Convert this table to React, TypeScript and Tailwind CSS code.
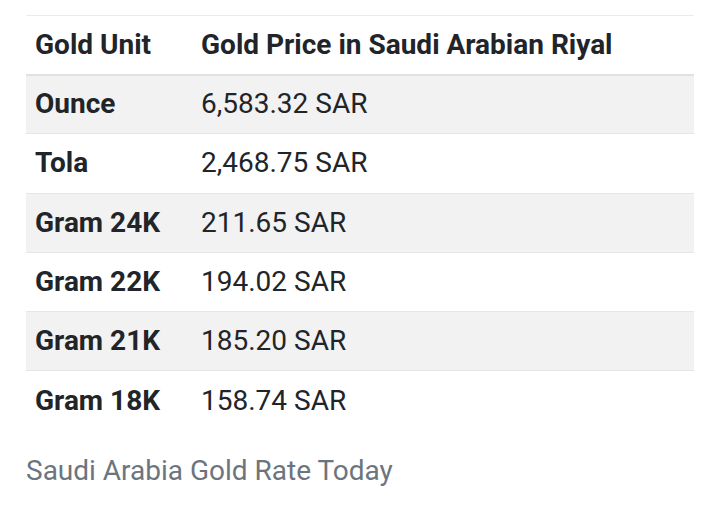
const rows = [
  { unit: "Ounce", price: "6,583.32 SAR" },
  { unit: "Tola", price: "2,468.75 SAR" },
  { unit: "Gram 24K", price: "211.65 SAR" },
  { unit: "Gram 22K", price: "194.02 SAR" },
  { unit: "Gram 21K", price: "185.20 SAR" },
  { unit: "Gram 18K", price: "158.74 SAR" },
];

export default function App() {
  return (
    <div
      className="min-h-[528px] w-[720px] bg-white px-[26px] pt-[15px] text-[28px] text-[#212529]"
      style={{ fontFamily: "Roboto, 'Noto Sans', sans-serif" }}
    >
      <table className="w-full border-collapse">
        <thead>
          <tr className="h-[59px] border-t border-b-2 border-t-[#e9ecef] border-b-[#dee2e6]">
            <th className="w-[165px] px-[9px] text-left font-bold">Gold Unit</th>
            <th className="px-[10px] text-left font-bold">Gold Price in Saudi Arabian Riyal</th>
          </tr>
        </thead>
        <tbody>
          {rows.map((r, i) => (
            <tr
              key={r.unit}
              className={
                "h-[59.3px] " +
                (i < rows.length - 1 ? "border-b border-[#e6e6e6] " : "") +
                (i % 2 === 0 ? "bg-[#f2f2f2]" : "bg-white")
              }
            >
              <td className="px-[9px] font-bold">{r.unit}</td>
              <td className="px-[10px]">{r.price}</td>
            </tr>
          ))}
        </tbody>
      </table>
      <p className="mt-[20px] leading-[42px] text-[#6c757d]">Saudi Arabia Gold Rate Today</p>
    </div>
  );
}
